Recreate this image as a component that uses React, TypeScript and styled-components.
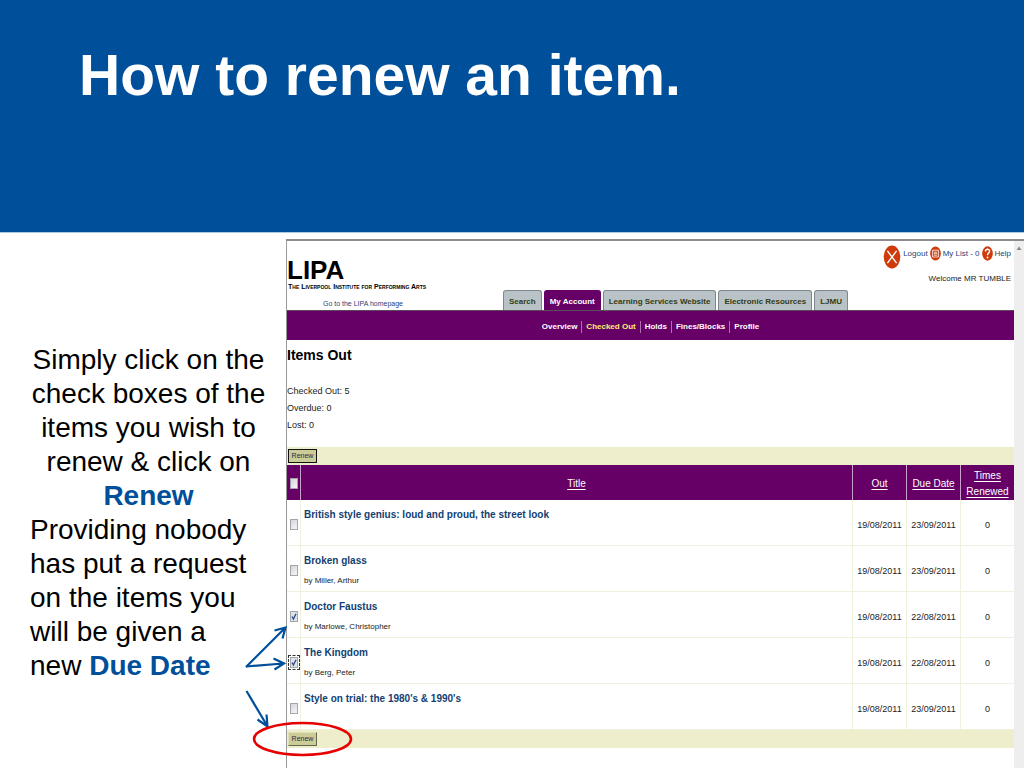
import React from "react";
import styled, { createGlobalStyle } from "styled-components";

const BLUE = "#004f9a";
const PURPLE = "#660066";
const SANS = '"Liberation Sans", Arial, sans-serif';

const GlobalStyle = createGlobalStyle`
  *, *::before, *::after { box-sizing: border-box; }
  body { margin: 0; background: #fff; color: #000; font-family: ${SANS}; }
`;

const Slide = styled.div`
  min-height: 100vh;
  display: flex;
  flex-direction: column;
  overflow: hidden;
`;

const Banner = styled.header`
  height: 233px;
  padding: 42px 79px 0;
  background: ${BLUE};
  border-bottom: 1px solid #a9cbe6;
`;

const SlideTitle = styled.h1`
  margin: 0;
  font-size: 57px;
  line-height: 66px;
  font-weight: bold;
  color: #fff;
`;

const Content = styled.main`
  position: relative;
  flex: 1;
  display: grid;
  grid-template-columns: 286px minmax(0, 1fr);
`;

const Instructions = styled.section`
  padding: 110px 19px 0 30px;
  font-size: 28px;
  line-height: 34px;
  white-space: nowrap;
`;

const Paragraph = styled.p<{ $centered?: boolean }>`
  margin: 0;
  text-align: ${(p) => (p.$centered ? "center" : "left")};
`;

const Keyword = styled.strong`
  color: ${BLUE};
`;

const Annotations = styled.svg`
  position: absolute;
  left: 240px;
  top: 380px;
  pointer-events: none;
`;

const Browser = styled.section`
  margin-top: 6px;
  display: flex;
  border-top: 2px solid #8f8a8f;
  border-left: 1px solid #9a9a9a;
`;

const Page = styled.div`
  flex: 1;
  min-width: 0;
`;

const Scrollbar = styled.div`
  width: 10px;
  padding-top: 5px;
  background: #eeeeee;
  display: flex;
  justify-content: center;
`;

const TopRow = styled.div`
  height: 49px;
  display: flex;
  justify-content: space-between;
`;

const Logo = styled.div`
  width: 152px;
  padding-top: 16px;
  white-space: nowrap;
`;

const LogoName = styled.div`
  font-size: 26px;
  line-height: 26px;
  font-weight: bold;
`;

const LogoTagline = styled.div`
  padding-left: 1px;
  font-size: 7px;
  line-height: 8px;
  font-weight: bold;
  font-variant: small-caps;
`;

const User = styled.div`
  padding: 4px 3px 0 0;
  font-size: 8px;
  text-align: right;
`;

const UserLinks = styled.nav`
  height: 24px;
  display: flex;
  align-items: flex-start;
  gap: 2px;
`;

const UserLink = styled.a`
  line-height: 18px;
  color: #27437a;
  text-decoration: none;
`;

const Welcome = styled.div`
  line-height: 20px;
  color: #222;
`;

const TabRow = styled.div`
  height: 20px;
  display: flex;
`;

const HomeCell = styled.div`
  width: 152px;
  margin-right: 64px;
  padding-top: 5px;
  font-size: 7px;
  line-height: 18px;
  text-align: center;
`;

const HomeLink = styled.a`
  color: #27437a;
  text-decoration: none;
`;

const Tabs = styled.nav`
  display: flex;
  gap: 2px;
`;

const Tab = styled.a<{ $active?: boolean }>`
  padding: 0 5px;
  border: 1px solid ${(p) => (p.$active ? PURPLE : "#7f888c")};
  border-bottom: 0;
  border-radius: 3px 3px 0 0;
  background: ${(p) => (p.$active ? PURPLE : "#b9c3c7")};
  color: ${(p) => (p.$active ? "#fff" : "#333b14")};
  font-size: 8px;
  line-height: 22px;
  font-weight: bold;
  text-decoration: none;
  white-space: nowrap;
`;

const SubNav = styled.nav`
  height: 30px;
  display: flex;
  justify-content: center;
  align-items: center;
  padding-top: 2px;
  border-top: 1px solid #5c4a5c;
  background: ${PURPLE};
`;

const SubLink = styled.a<{ $active?: boolean }>`
  padding: 0 4px;
  font-size: 8px;
  line-height: 12px;
  font-weight: bold;
  text-decoration: none;
  color: ${(p) => (p.$active ? "#ffee77" : "#fff")};
  & + & { border-left: 1px solid #b06fb0; }
`;

const Heading = styled.h2`
  margin: 0;
  font-size: 14px;
  line-height: 30px;
  font-weight: bold;
`;

const Summary = styled.div`
  padding: 13px 0;
  font-size: 9px;
  line-height: 17px;
  color: #222;
`;

const ActionBar = styled.div`
  height: 18px;
  padding: 2px 1px;
  display: flex;
  background: #eeeecc;
`;

const RenewButton = styled.button<{ $focused?: boolean }>`
  width: 29px;
  height: 14px;
  padding: 0;
  border: 1px solid;
  border-color: ${(p) => (p.$focused ? "#111" : "#e0e0b8 #66664c #66664c #e0e0b8")};
  background: #cccc99;
  color: #2a2a4a;
  font: 7px/12px ${SANS};
`;

const Table = styled.table`
  width: 100%;
  table-layout: fixed;
  border-collapse: separate;
  border-spacing: 0;
  color: #222;
`;

const CheckCol = styled.col`
  width: 13px;
`;

const DateCol = styled.col`
  width: 54px;
`;

const HeadCell = styled.th`
  height: 35px;
  padding: 2px 0 0;
  background: ${PURPLE};
  font-size: 10px;
  line-height: 16px;
  font-weight: normal;
  & + & { border-left: 1px solid #c9a3c9; }
`;

const SortLink = styled.a`
  color: #fff;
  text-decoration: underline;
  text-underline-offset: 2px;
`;

const Cell = styled.td`
  height: 46px;
  padding: 4px 0 0;
  border-bottom: 1px solid #f0f0dc;
  font-size: 9px;
  line-height: 16px;
  text-align: center;
  & + & { border-left: 1px solid #f0f0dc; }
`;

const TitleCell = styled(Cell)`
  padding: 6px 3px 0;
  text-align: left;
  vertical-align: top;
`;

const ItemLink = styled.a`
  display: block;
  font-size: 10px;
  line-height: 18px;
  font-weight: bold;
  color: #123f73;
  text-decoration: none;
`;

const Author = styled.div`
  padding-top: 3px;
  font-size: 8px;
  line-height: 16px;
`;

const Tick = styled.input`
  appearance: none;
  display: block;
  width: 8px;
  height: 11px;
  margin: 0 auto;
  border: 1px solid #a3a5a8;
  background: linear-gradient(135deg, #d2d4d8, #f8f8f8);
  &:checked {
    background: #dde3ea url("data:image/svg+xml,%3Csvg xmlns='http://www.w3.org/2000/svg' viewBox='0 0 6 9'%3E%3Cpath d='M1 4.5 2.4 7 5 1.8' fill='none' stroke='%23304a80' stroke-width='1.3'/%3E%3C/svg%3E") center / contain no-repeat;
  }
  &[data-focus="true"] {
    outline: 1px dashed #333;
    outline-offset: 1px;
  }
`;

type Item = {
  title: string;
  author?: string;
  due: string;
  checked?: boolean;
  focused?: boolean;
};

const items: Item[] = [
  { title: "British style genius: loud and proud, the street look", due: "23/09/2011" },
  { title: "Broken glass", author: "by Miller, Arthur", due: "23/09/2011" },
  { title: "Doctor Faustus", author: "by Marlowe, Christopher", due: "22/08/2011", checked: true },
  { title: "The Kingdom", author: "by Berg, Peter", due: "22/08/2011", checked: true, focused: true },
  { title: "Style on trial: the 1980's & 1990's", due: "23/09/2011" },
];

const tabs = ["Search", "My Account", "Learning Services Website", "Electronic Resources", "LJMU"];
const subLinks = ["Overview", "Checked Out", "Holds", "Fines/Blocks", "Profile"];

const LogoutIcon = () => (
  <svg width="18" height="24" viewBox="0 0 18 24" aria-hidden="true">
    <ellipse cx="9" cy="12" rx="8.3" ry="11.4" fill="#cf3a0c" />
    <path d="M4.4 5.8 13.6 18.2M13.6 5.8 4.4 18.2" stroke="#fff" strokeWidth="1.4" />
  </svg>
);

const ListIcon = () => (
  <svg width="11" height="17" viewBox="0 0 11 17" aria-hidden="true">
    <ellipse cx="5.5" cy="8.5" rx="5.3" ry="7" fill="#cf3a0c" />
    <path d="M2.6 5.2h5.8v6.8H2.6zM3.8 7.2h3.4M3.8 8.7h3.4M3.8 10.2h3.4" fill="none" stroke="#fff" strokeWidth="0.8" />
  </svg>
);

const HelpIcon = () => (
  <svg width="11" height="17" viewBox="0 0 11 17" aria-hidden="true">
    <ellipse cx="5.5" cy="8.5" rx="5.3" ry="7.2" fill="#cf3a0c" />
    <path d="M3.5 6.4C3.5 3.6 7.6 3.6 7.6 6.2 7.6 8 5.5 8 5.5 10.2" fill="none" stroke="#fff" strokeWidth="1.4" />
    <circle cx="5.5" cy="12.5" r="0.9" fill="#fff" />
  </svg>
);

export default function App() {
  return (
    <>
      <GlobalStyle />
      <Slide>
        <Banner>
          <SlideTitle>How to renew an item.</SlideTitle>
        </Banner>
        <Content>
          <Instructions>
            <Paragraph $centered>
              Simply click on the
              <br />
              check boxes of the
              <br />
              items you wish to
              <br />
              renew &amp; click on
              <br />
              <Keyword>Renew</Keyword>
            </Paragraph>
            <Paragraph>
              Providing nobody
              <br />
              has put a request
              <br />
              on the items you
              <br />
              will be given a
              <br />
              new <Keyword>Due Date</Keyword>
            </Paragraph>
          </Instructions>
          <Browser>
            <Page>
              <TopRow>
                <Logo>
                  <LogoName>LIPA</LogoName>
                  <LogoTagline>The Liverpool Institute for Performing Arts</LogoTagline>
                </Logo>
                <User>
                  <UserLinks>
                    <LogoutIcon />
                    <UserLink href="#logout">Logout</UserLink>
                    <ListIcon />
                    <UserLink href="#list">My List - 0</UserLink>
                    <HelpIcon />
                    <UserLink href="#help">Help</UserLink>
                  </UserLinks>
                  <Welcome>Welcome MR TUMBLE</Welcome>
                </User>
              </TopRow>
              <TabRow>
                <HomeCell>
                  <HomeLink href="#home">Go to the LIPA homepage</HomeLink>
                </HomeCell>
                <Tabs>
                  {tabs.map((tab) => (
                    <Tab key={tab} href="#tab" $active={tab === "My Account"}>
                      {tab}
                    </Tab>
                  ))}
                </Tabs>
              </TabRow>
              <SubNav>
                {subLinks.map((link) => (
                  <SubLink key={link} href="#section" $active={link === "Checked Out"}>
                    {link}
                  </SubLink>
                ))}
              </SubNav>
              <Heading>Items Out</Heading>
              <Summary>
                <div>Checked Out: 5</div>
                <div>Overdue: 0</div>
                <div>Lost: 0</div>
              </Summary>
              <ActionBar>
                <RenewButton type="button" $focused>
                  Renew
                </RenewButton>
              </ActionBar>
              <Table>
                <colgroup>
                  <CheckCol />
                  <col />
                  <DateCol />
                  <DateCol />
                  <DateCol />
                </colgroup>
                <thead>
                  <tr>
                    <HeadCell>
                      <Tick type="checkbox" aria-label="Select all items" />
                    </HeadCell>
                    <HeadCell>
                      <SortLink href="#title">Title</SortLink>
                    </HeadCell>
                    <HeadCell>
                      <SortLink href="#out">Out</SortLink>
                    </HeadCell>
                    <HeadCell>
                      <SortLink href="#due">Due Date</SortLink>
                    </HeadCell>
                    <HeadCell>
                      <SortLink href="#times">
                        Times
                        <br />
                        Renewed
                      </SortLink>
                    </HeadCell>
                  </tr>
                </thead>
                <tbody>
                  {items.map((item) => (
                    <tr key={item.title}>
                      <Cell>
                        <Tick
                          type="checkbox"
                          aria-label={item.title}
                          defaultChecked={item.checked}
                          data-focus={item.focused}
                        />
                      </Cell>
                      <TitleCell>
                        <ItemLink href="#item">{item.title}</ItemLink>
                        {item.author && <Author>{item.author}</Author>}
                      </TitleCell>
                      <Cell>19/08/2011</Cell>
                      <Cell>{item.due}</Cell>
                      <Cell>0</Cell>
                    </tr>
                  ))}
                </tbody>
              </Table>
              <ActionBar>
                <RenewButton type="button">Renew</RenewButton>
              </ActionBar>
            </Page>
            <Scrollbar>
              <svg width="6" height="4" viewBox="0 0 6 4" aria-hidden="true">
                <path d="M0.5 4 3 0.5 5.5 4z" fill="#8a8a8a" />
              </svg>
            </Scrollbar>
          </Browser>
          <Annotations width="120" height="150" viewBox="240 613 120 150" fill="none" aria-hidden="true">
            <g stroke={BLUE} strokeWidth="2.2">
              <path d="M246 667 285 628M274.5 630.5 285.5 627.5 282.5 638.5" />
              <path d="M246 666.5 283 663.5M273.5 658.5 284 663.5 274.5 669.5" />
              <path d="M246.5 691 267 725.5M257.5 719.5 267.5 726.5 266.5 714.5" />
            </g>
            <ellipse cx="302.5" cy="739" rx="48.5" ry="16" stroke="#e60000" strokeWidth="2.6" />
          </Annotations>
        </Content>
      </Slide>
    </>
  );
}
